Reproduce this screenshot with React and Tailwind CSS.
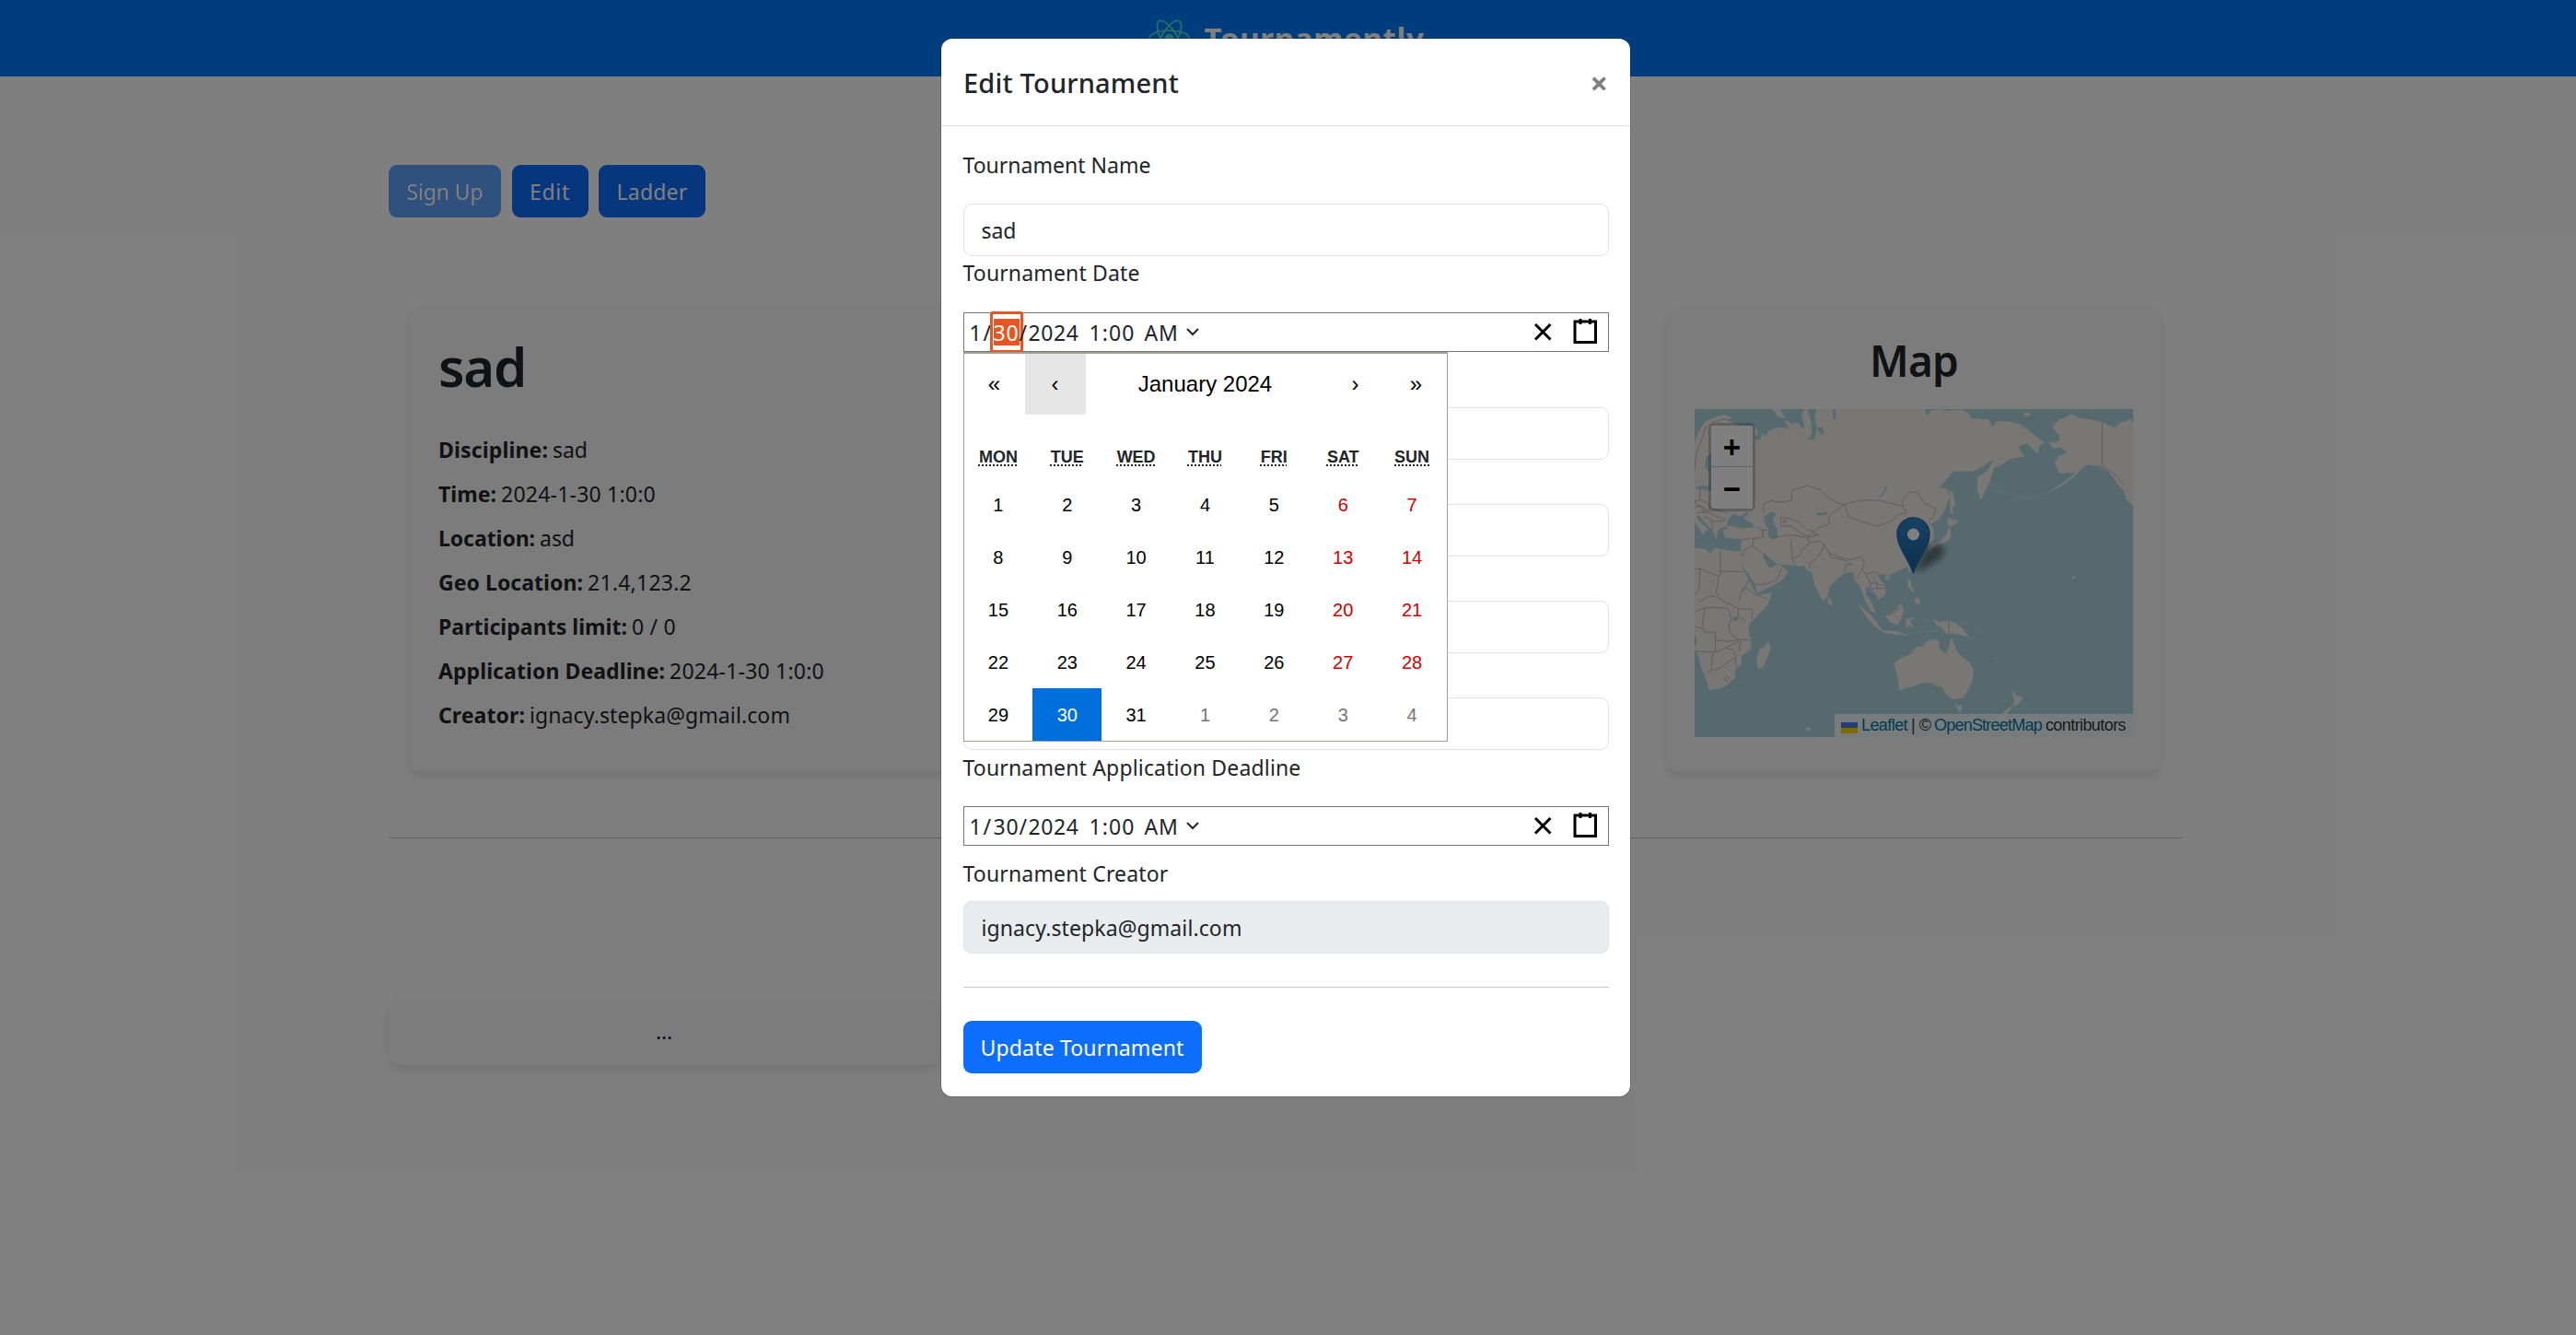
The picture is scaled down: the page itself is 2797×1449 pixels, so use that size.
import { useLayoutEffect, useRef, useState } from "react";

/* Text set to a given measure by adjusting its tracking. */
function Fit({ w, className = "", children }) {
  const ref = useRef(null);
  const [spacing, setSpacing] = useState(0);
  useLayoutEffect(() => {
    const el = ref.current;
    el.style.letterSpacing = "0px";
    const natural = el.getBoundingClientRect().width;
    const next = (w - natural) / String(children).length;
    el.style.letterSpacing = `${next}px`;
    setSpacing(next);
  }, [w, children]);
  return (
    <span ref={ref} className={`inline-block whitespace-nowrap ${className}`} style={{ letterSpacing: `${spacing}px` }}>
      {children}
    </span>
  );
}

function ReactLogo() {
  return (
    <svg viewBox="-12 -12 24 24" className="h-[47px] w-[47px]" fill="none" stroke="#5ad8c8" strokeWidth="0.9">
      <circle r="2" fill="#5ad8c8" />
      <ellipse rx="11" ry="4.3" />
      <ellipse rx="11" ry="4.3" transform="rotate(60)" />
      <ellipse rx="11" ry="4.3" transform="rotate(120)" />
    </svg>
  );
}

const DETAILS = [
  ["Discipline:", 119, "sad", 38],
  ["Time:", 63, "2024-1-30 1:0:0", 168],
  ["Location:", 105, "asd", 38],
  ["Geo Location:", 157, "21.4,123.2", 113],
  ["Participants limit:", 205, "0 / 0", 48],
  ["Application Deadline:", 246, "2024-1-30 1:0:0", 168],
  ["Creator:", 94, "ignacy.stepka@gmail.com", 283],
];

const LAND = [
  "153,480 160,455 172,432 185,412 205,402 222,396 240,392 258,402 242,410 262,416 290,428 318,424 330,436 332,450 322,458 328,470 340,466 345,450 358,458 362,442 380,434 396,430 418,434 416,420 408,408 424,414 428,422 445,416 456,430 466,436 462,410 458,392 464,374 805,374 812,396 826,378 852,376 868,382 895,376 918,380 932,390 938,404 985,406 994,420 1002,430 1010,412 1045,412 1078,422 1110,448 1145,476 1132,482 1126,508 1108,490 1098,478 1080,482 1070,490 1088,518 1050,524 1020,545 1002,552 996,575 984,608 965,648 956,622 958,580 985,562 1004,522 975,545 945,562 885,562 865,590 845,612 870,618 876,642 862,680 848,706 822,722 832,745 828,775 815,782 806,745 790,740 770,752 792,768 786,800 770,830 756,852 722,870 700,880 690,874 670,880 690,906 695,936 675,950 665,932 650,918 640,910 638,935 655,965 666,992 654,988 640,960 630,930 620,905 608,898 604,868 590,868 575,875 558,888 536,912 530,938 520,956 508,938 492,900 486,868 472,862 465,850 435,848 405,845 385,842 352,812 346,825 365,858 380,852 392,845 418,868 400,895 375,908 332,932 325,905 302,870 275,824 284,804 286,782 290,768 262,766 240,764 234,742 250,738 242,728 220,738 214,768 204,742 182,718 165,696 158,700 166,714 192,740 184,742 178,756 165,734 153,716",
  "153,797 185,800 196,814 210,797 240,802 262,806 280,806 275,824 290,860 305,890 322,925 334,940 372,933 360,968 330,1002 308,1025 305,1050 312,1075 312,1102 285,1125 285,1150 268,1165 266,1190 245,1212 225,1222 195,1226 185,1190 172,1160 165,1124 153,1105 160,1080 153,1050",
  "362,1080 368,1100 356,1135 345,1160 332,1160 330,1140 336,1105 352,1098",
  "878,622 884,625 892,665 884,672 886,692 879,688",
  "875,702 886,710 902,714 892,722 876,730 870,720",
  "876,733 880,750 876,770 855,782 838,784 820,806 818,796 826,782 850,776 868,756",
  "1168,430 1185,408 1205,400 1222,390 1245,402 1285,408 1310,415 1345,432 1362,414 1380,412 1388,402 1397,420 1397,667 1380,650 1370,620 1350,595 1330,565 1306,548 1270,542 1252,552 1228,580 1196,606 1160,625 1200,598 1238,566 1190,568 1175,540 1188,515 1212,510 1195,490 1170,492 1160,476 1190,472 1190,455",
  "1085,388 1100,384 1106,392 1092,396",
  "374,374 396,374 404,392 408,402 390,396",
  "720,1145 740,1130 765,1120 780,1098 800,1095 812,1080 830,1074 848,1078 845,1100 865,1118 875,1102 881,1070 890,1090 896,1108 905,1120 930,1142 943,1162 942,1190 932,1220 915,1250 885,1255 868,1240 852,1214 842,1216 825,1204 800,1205 770,1216 748,1222 735,1228 730,1190",
  "893,1270 904,1276 915,1272 905,1296",
  "1055,1228 1066,1246 1084,1250 1070,1270 1060,1276 1060,1258",
  "1055,1274 1044,1292 1028,1318 1012,1312 1036,1290",
  "694,1002 715,992 738,965 746,985 738,1010 728,1028 708,1020",
  "618,970 636,985 660,1008 684,1046 670,1040 645,1010",
  "676,1044 700,1048 725,1050 756,1060 720,1058 690,1052",
  "752,1012 776,1008 762,1016 774,1036 764,1028 756,1038",
  "832,1015 846,1022 865,1018 892,1024 912,1040 930,1066 905,1058 885,1054 868,1056 852,1034 840,1030",
  "758,892 766,894 768,914 778,930 768,924 760,914",
  "778,948 790,950 790,968 780,962",
  "533,946 544,962 538,970 532,962",
  "694,884 704,880 704,890 696,892",
  "758,852 765,850 762,870",
  "468,1342 478,1340 482,1348 472,1348",
  "1224,880 1232,884 1228,890",
];

const LAKES = [
  "350,702 370,685 384,692 374,712 388,740 388,766 372,770 362,762 362,738 350,716",
  "244,728 248,710 262,692 284,700 300,686 306,690 292,706 318,722 320,734 285,736 262,730",
  "153,614 172,606 192,608 196,570 182,548 186,520 200,508 200,622 172,618",
  "472,374 500,374 494,400 500,430 494,466 474,466 486,448 484,420 480,396",
  "500,432 512,428 522,440 516,454 505,442",
  "545,376 552,374 553,410 547,402",
  "668,642 686,632 698,602 698,618 684,640",
  "262,1006 278,1004 276,1016 264,1018",
  "404,708 416,716 406,722",
  "498,690 530,688 528,694 502,698",
];

const BORDERS = [
  "M153 560 L158 505 175 462 184 428 M184 428 L208 412 240 404 256 410 M153 654 L172 650 190 660 200 676 222 682 248 690 M153 672 L172 668 182 680 200 682 M160 690 L190 686 206 696 240 710 M182 700 L200 712 204 740 M200 716 L238 714 M168 618 L168 650 M153 650 L160 665 178 672 176 690",
  "M350 690 L348 662 370 652 390 656 428 652 430 620 475 606 510 620 530 640 560 660 578 664 600 656 640 650 680 652 745 670 755 688 730 694 715 712 672 730 632 718 590 700 578 664",
  "M578 664 L550 684 534 700 534 722 510 732 490 745 470 740 448 716 420 706 398 702 398 730 M398 730 L425 728 455 750 472 760 490 748 505 756 474 764 450 760 430 756 400 760",
  "M745 670 L742 650 762 626 785 626 805 660 838 676 830 700 818 712 820 725",
  "M400 760 L374 766 M290 770 L320 766 348 764 345 742 325 730 M348 764 L345 742 360 742 M320 766 L318 790 345 812 M290 820 L296 800 318 790 M290 820 L282 812 M345 812 L356 818",
  "M426 770 L430 830 438 848 M430 830 L452 818 458 800 480 780 472 765 M480 780 L508 775 520 785 515 805 495 830 478 845 480 860 M520 785 L535 812 560 822 598 832 M535 812 L540 824 590 836 600 848 582 845 578 868",
  "M598 832 L625 822 635 840 628 862 640 876 660 868 680 876 M640 876 L650 900 672 905 690 910 M628 862 L610 895 M650 900 L655 920 690 918 M658 885 L672 905 670 920",
  "M226 806 L226 866 290 868 M226 866 L222 882 168 858 153 862 M222 882 L214 930 222 950 278 980 316 982 M168 858 L166 920 153 940 M166 958 L196 942 214 944 M153 990 L180 978 222 976 248 980",
  "M248 980 L258 1010 250 1030 254 1055 M316 982 L316 1010 M278 980 L276 1000 300 1020 M278 960 L284 930 300 918 330 940 358 950 M284 930 L310 890 M153 1036 L178 1040 182 1052 212 1052 212 1075 248 1080 280 1074 310 1074 M182 978 L174 1035",
  "M153 1110 L212 1112 240 1100 276 1080 M212 1075 L212 1112 M205 1112 L200 1168 188 1175 M200 1168 L228 1160 248 1140 270 1128 264 1105 240 1100 M236 1190 L244 1182 252 1190 242 1200 236 1190 M268 1130 L272 1160 M254 1055 L284 1080 278 1110",
  "M1310 415 L1310 548 1330 560 1352 580 1372 606 M874 1020 L874 1056 M702 1000 L722 990 735 975 M325 905 L345 908 385 895 M385 895 L400 858 M640 935 L655 940",
];

function WorldMap() {
  return (
    <svg viewBox="153 374 1244 996" preserveAspectRatio="none" className="block h-full w-full bg-[#aad3df]">
      <g fill="#f2efe9" stroke="#f2efe9" strokeWidth="2" strokeLinejoin="round">
        {LAND.map((p) => <polygon key={p} points={p} />)}
      </g>
      <g fill="#aad3df">
        {LAKES.map((p) => <polygon key={p} points={p} />)}
      </g>
      <g fill="none" stroke="#c2adbb" strokeWidth="2.4" strokeLinejoin="round">
        {BORDERS.map((d) => <path key={d} d={d} />)}
      </g>
      <path d="M900 708 L940 680 M1000 615 Q1090 660 1160 625 M790 1000 L800 990 M800 1012 L835 1016 M760 1058 L845 1045 M900 1030 L935 1022 M950 1036 L990 1062 M1004 1130 L1018 1140 M1078 1114 L1090 1102 M1015 1095 L1025 1115 M748 948 L742 962 M770 930 L790 945" fill="none" stroke="#dfe4df" strokeWidth="2.5" strokeDasharray="8 5" />
    </svg>
  );
}

function Pin() {
  return (
    <svg viewBox="0 0 66 66" className="h-[66px] w-[66px] overflow-visible">
      <defs>
        <linearGradient id="pin" x1="0" y1="0" x2="0" y2="1">
          <stop offset="0" stopColor="#2e85cb" />
          <stop offset="1" stopColor="#1a6098" />
        </linearGradient>
        <filter id="soft" x="-50%" y="-50%" width="200%" height="200%">
          <feGaussianBlur stdDeviation="3.5" />
        </filter>
      </defs>
      <path d="M19 61 L31 36 Q46 24 52 35 Q55 46 19 61Z" fill="#000" opacity="0.45" filter="url(#soft)" />
      <path d="M18.5 60.5 C14 47 1 33 1 18.500 A17.500 17.500 0 0 1 36 18.500 C36 33 23 47 18.500 60.500Z" fill="url(#pin)" stroke="#2a6ea5" strokeWidth="1.5" />
      <circle cx="18.500" cy="19" r="6.500" fill="#fff" />
    </svg>
  );
}

function Page() {
  return (
    <div className="h-full w-full bg-white">
      <header className="flex h-[83px] items-center justify-center gap-[15px] bg-[#007bff] pr-[5px] text-white">
        <ReactLogo />
        <Fit w={239} className="text-[33px] leading-[48px] font-bold">Tournamently</Fit>
      </header>
      <main className="pr-[5px]">
        <div className="mx-auto w-[1948px]">
          <div className="flex gap-[11.5px] pt-24">
            <button className="flex h-[57px] w-[122px] items-center justify-center rounded-[9px] bg-[#0d6efd] text-white opacity-65">
              <Fit w={83}>Sign Up</Fit>
            </button>
            <button className="flex h-[57px] w-[83px] items-center justify-center rounded-[9px] bg-[#0d6efd] text-white">
              <Fit w={44}>Edit</Fit>
            </button>
            <button className="flex h-[57px] w-[116px] items-center justify-center rounded-[9px] bg-[#0d6efd] text-white">
              <Fit w={77}>Ladder</Fit>
            </button>
          </div>

          <div className="mt-24 flex justify-between pr-6 pl-[23px]">
            <section className="h-[505px] w-[1316px] rounded-xl bg-[#f9f9f9] px-[31px] pt-[30px] shadow-[0_6px_12px_rgba(0,0,0,0.1)]">
              <h1 className="text-[58px] leading-[72px] font-semibold">
                <Fit w={95}>sad</Fit>
              </h1>
              <div className="mt-9 flex flex-col gap-3">
                {DETAILS.map(([label, lw, value, vw]) => (
                  <p key={label} className="flex gap-[5px]">
                    <Fit w={lw} className="font-bold">{label}</Fit>
                    <Fit w={vw}>{value}</Fit>
                  </p>
                ))}
              </div>
            </section>
            <section className="flex h-[505px] w-[536px] flex-col rounded-xl bg-[#f9f9f9] px-[30px] pt-[30px] shadow-[0_6px_12px_rgba(0,0,0,0.1)]">
              <h2 className="text-center text-[46px] leading-[58px] font-semibold">
                <Fit w={96}>Map</Fit>
              </h2>
              <div className="relative mt-6 h-[356px] w-[476px]">
                <WorldMap />
                <div className="absolute top-[15px] left-[15px] rounded-md border-[3px] border-black/20 font-['Liberation_Sans',sans-serif] text-[33px] leading-[47px] font-bold text-black">
                  <div className="h-[45px] w-[45px] rounded-t-[3px] border-b border-[#ccc] bg-white text-center">+</div>
                  <div className="h-[45px] w-[45px] rounded-b-[3px] bg-white text-center">−</div>
                </div>
                <div className="absolute top-[116.500px] left-[219px]">
                  <Pin />
                </div>
                <div className="absolute right-0 bottom-0 flex h-[25px] w-[324px] items-center bg-white/80 pl-[7px] font-['Liberation_Sans',sans-serif] text-[18px] leading-6 whitespace-pre text-[#333]">
                  <svg viewBox="0 0 18 12" className="mt-1 mr-1 h-3 w-[18px]">
                    <path fill="#4C7BE1" d="M0 0h18v6H0z" />
                    <path fill="#FFD500" d="M0 6h18v6H0z" />
                  </svg>
                  <Fit w={50} className="-mt-0.5 text-[#0078a8]">Leaflet</Fit>
                  <span className="-mt-0.5 mx-1">|</span>
                  <span className="-mt-0.5 mr-[3px]">©</span>
                  <Fit w={117} className="-mt-0.5 text-[#0078a8]">OpenStreetMap</Fit>
                  <Fit w={87} className="-mt-0.5 ml-1">contributors</Fit>
                </div>
              </div>
            </section>
          </div>

          <hr className="mt-[72px] border-t-[1.5px] border-[#c8c9ca]" />
          <section className="mt-[175px] flex h-[71px] w-[598px] items-center justify-center rounded-xl bg-[#f9f9f9] pb-1 shadow-[0_6px_12px_rgba(0,0,0,0.1)]">
            <Fit w={18}>...</Fit>
          </section>
        </div>
      </main>
    </div>
  );
}

function TextInput({ value, w, disabled, className = "" }) {
  return (
    <div className={`flex h-[57px] shrink-0 items-center rounded-[9px] border-[1.5px] border-[#dee2e6] px-[19px] ${disabled ? "bg-[#e9ecef]" : "bg-white"} ${className}`}>
      {value && <Fit w={w}>{value}</Fit>}
    </div>
  );
}

function DateField({ active, className = "" }) {
  return (
    <div className={`flex h-[43px] shrink-0 items-center border-[1.5px] border-[#767676] bg-white pl-[6px] ${className}`}>
      <Fit w={15}>1</Fit>
      <Fit w={11}>/</Fit>
      <span className={active ? "-my-1 flex h-[45px] w-[36px] shrink-0 -mx-[4px] items-center justify-center rounded-[3px] border-[3px] border-[#e95420] bg-white" : "-mx-[4px] flex w-[36px] justify-center"}>
        <span className={active ? "flex h-[29px] w-[28px] items-center bg-[#e95420] text-white" : "flex w-[28px]"}>
          <Fit w={28}>30</Fit>
        </span>
      </span>
      <Fit w={10}>/</Fit>
      <Fit w={55}>2024</Fit>
      <Fit w={50} className="ml-[11px]">1:00</Fit>
      <Fit w={37} className="ml-[10px]">AM</Fit>
      <svg viewBox="0 0 14 9" className="ml-[8px] h-[9px] w-[14px]" fill="none" stroke="#212529" strokeWidth="2">
        <path d="M1 1 L7 7 L13 1" />
      </svg>
      <svg viewBox="0 0 19 19" className="ml-auto h-[28.500px] w-[28.500px]" stroke="#000" strokeWidth="2">
        <path d="M4 4 L15 15 M15 4 L4 15" />
      </svg>
      <svg viewBox="0 0 19 19" className="mr-[10px] ml-[18px] h-[28.500px] w-[28.500px]" fill="none" stroke="#000" strokeWidth="2">
        <rect x="2" y="2" width="15" height="15" />
        <path d="M6 0 V4 M13 0 V4" />
      </svg>
    </div>
  );
}

const WEEKDAYS = ["MON", "TUE", "WED", "THU", "FRI", "SAT", "SUN"];
const DAYS = [...Array.from({ length: 31 }, (_, i) => i + 1), 1, 2, 3, 4];

function dayClass(i) {
  if (i === 29) return "bg-[#006edc] text-white";
  if (i > 30) return "text-[#757575]";
  if (i % 7 > 4) return "text-[#d10000]";
  return "text-black";
}

function Calendar() {
  return (
    <div className="absolute top-full left-0 w-[526px] border border-t-2 border-[#a0a096] bg-white font-['Liberation_Sans',sans-serif] text-black">
      <div className="mb-6 flex h-[66px] items-stretch text-[24px]">
        <button className="w-[66px]">«</button>
        <button className="w-[66px] bg-[#e6e6e6]">‹</button>
        <button className="flex-1">January 2024</button>
        <button className="w-[66px]">›</button>
        <button className="w-[66px]">»</button>
      </div>
      <div className="grid h-[45px] grid-cols-7 items-center text-center text-[18px] leading-[27px] font-bold text-[#212529]">
        {WEEKDAYS.map((d) => (
          <span key={d}>
            <abbr className="underline decoration-dotted decoration-[1.5px] underline-offset-[2px]">{d}</abbr>
          </span>
        ))}
      </div>
      <div className="grid grid-cols-7 text-[20px]">
        {DAYS.map((d, i) => (
          <button key={i} className={`h-[57px] ${dayClass(i)}`}>{d}</button>
        ))}
      </div>
    </div>
  );
}

function EditModal() {
  return (
    <div className="flex h-[1148px] w-[748px] flex-col rounded-xl bg-white shadow-[0_0_0_1px_rgba(0,0,0,0.175)]">
      <div className="flex h-[95px] shrink-0 items-center justify-between border-b-[1.5px] border-[#dee2e6] pr-6 pl-6">
        <Fit w={234} className="text-[29px] leading-[45px] font-medium">Edit Tournament</Fit>
        <span className="pt-0.5 text-[34px] leading-none font-bold text-[#808080]">×</span>
      </div>
      <div className="flex flex-col px-[23.500px] pt-6">
        <label><Fit w={204}>Tournament Name</Fit></label>
        <TextInput className="mt-6" value="sad" w={38} />
        <label><Fit w={192}>Tournament Date</Fit></label>
        <div className="relative z-10 mt-[25px]">
          <DateField active />
          <Calendar />
        </div>
        <TextInput className="mt-[60px]" />
        <TextInput className="mt-12" />
        <TextInput className="mt-12" />
        <TextInput className="mt-12" />
        <label className="pt-px"><Fit w={367}>Tournament Application Deadline</Fit></label>
        <DateField className="mt-6" />
        <label className="mt-3"><Fit w={223}>Tournament Creator</Fit></label>
        <TextInput className="mt-3" value="ignacy.stepka@gmail.com" w={283} disabled />
        <hr className="mt-9 border-t-[1.5px] border-[#c8c9ca]" />
        <button className="mt-9 flex h-[57px] w-[259px] items-center justify-center rounded-[9px] bg-[#0d6efd] text-white">
          <Fit w={221}>Update Tournament</Fit>
        </button>
      </div>
    </div>
  );
}

export default function App() {
  return (
    <div className="relative h-[1449px] w-full overflow-hidden font-['Noto_Sans',sans-serif] text-[23px] leading-9 text-[#212529]">
      <Page />
      <div className="absolute inset-0 flex items-start justify-center bg-black/50 pt-[42px] pr-[5px]">
        <EditModal />
      </div>
    </div>
  );
}
